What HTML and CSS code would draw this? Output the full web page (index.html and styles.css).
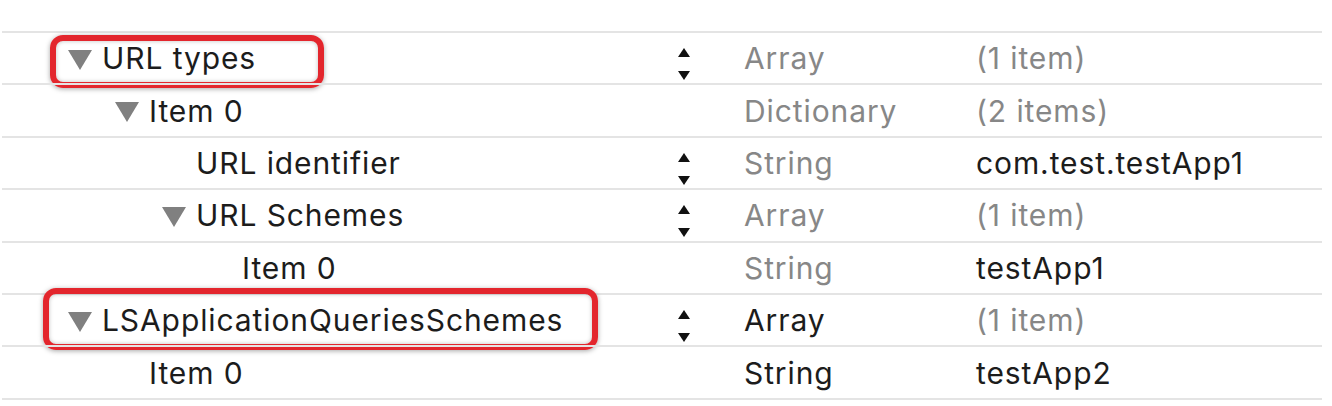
FILE: index.html
```html
<!DOCTYPE html>
<html>
<head>
<meta charset="utf-8">
<link rel="stylesheet" href="styles.css">
</head>
<body>
<div class="plist">
  <div class="row">
    <div class="key lvl0"><svg class="disc" viewBox="0 0 24 20"><polygon points="0,0 24,0 12,20"/></svg><span>URL types</span></div>
    <div class="step"><svg viewBox="0 0 12 32"><polygon points="6,0 12,9 0,9"/><polygon points="0,23 12,23 6,32"/></svg></div>
    <div class="type dim">Array</div>
    <div class="val dim">(1 item)</div>
    <div class="mark mark1"></div>
  </div>
  <div class="row">
    <div class="key lvl1"><svg class="disc" viewBox="0 0 24 20"><polygon points="0,0 24,0 12,20"/></svg><span>Item 0</span></div>
    <div class="step"></div>
    <div class="type dim">Dictionary</div>
    <div class="val dim">(2 items)</div>
  </div>
  <div class="row">
    <div class="key lvl2"><span class="nodisc"></span><span>URL identifier</span></div>
    <div class="step"><svg viewBox="0 0 12 32"><polygon points="6,0 12,9 0,9"/><polygon points="0,23 12,23 6,32"/></svg></div>
    <div class="type dim">String</div>
    <div class="val">com.test.testApp1</div>
  </div>
  <div class="row">
    <div class="key lvl2"><svg class="disc" viewBox="0 0 24 20"><polygon points="0,0 24,0 12,20"/></svg><span>URL Schemes</span></div>
    <div class="step"><svg viewBox="0 0 12 32"><polygon points="6,0 12,9 0,9"/><polygon points="0,23 12,23 6,32"/></svg></div>
    <div class="type dim">Array</div>
    <div class="val dim">(1 item)</div>
  </div>
  <div class="row">
    <div class="key lvl3"><span class="nodisc"></span><span>Item 0</span></div>
    <div class="step"></div>
    <div class="type dim">String</div>
    <div class="val">testApp1</div>
  </div>
  <div class="row">
    <div class="key lvl0"><svg class="disc" viewBox="0 0 24 20"><polygon points="0,0 24,0 12,20"/></svg><span>LSApplicationQueriesSchemes</span></div>
    <div class="step"><svg viewBox="0 0 12 32"><polygon points="6,0 12,9 0,9"/><polygon points="0,23 12,23 6,32"/></svg></div>
    <div class="type">Array</div>
    <div class="val dim">(1 item)</div>
    <div class="mark mark2"></div>
  </div>
  <div class="row last">
    <div class="key lvl1"><span class="nodisc"></span><span>Item 0</span></div>
    <div class="step"></div>
    <div class="type">String</div>
    <div class="val">testApp2</div>
  </div>
</div>
</body>
</html>
```
FILE: styles.css
```css
html, body {
  margin: 0;
  padding: 0;
  background: #ffffff;
}
body {
  padding-top: 31px;
  font-family: Inter, "Liberation Sans", sans-serif;
  font-size: 30px;
  letter-spacing: 0.9px;
  color: #1c1c1c;
}
.plist {
  margin-left: 2px;
  width: 1320px;
}
.row {
  position: relative;
  box-sizing: border-box;
  height: 52.4px;
  border-top: 2px solid #e4e4e4;
  display: grid;
  grid-template-columns: 662px 40px 273px 1fr;
  align-items: center;
}
.row.last {
  height: 54.4px;
  border-bottom: 2px solid #e4e4e4;
}
.key {
  display: flex;
  align-items: center;
  white-space: nowrap;
}
.lvl0 { padding-left: 66px; }
.lvl1 { padding-left: 113px; }
.lvl2 { padding-left: 160px; }
.lvl3 { padding-left: 206px; }
.disc {
  width: 24px;
  height: 20px;
  fill: #808080;
  margin-right: 10px;
  margin-top: 3px;
  flex: none;
}
.nodisc {
  display: inline-block;
  width: 34px;
  flex: none;
}
.step {
  display: flex;
  justify-content: center;
  align-items: center;
  height: 100%;
}
.step svg {
  width: 12px;
  height: 32px;
  fill: #111111;
  margin-top: 12px;
}
.type {
  padding-left: 40px;
  white-space: nowrap;
}
.val {
  margin-left: -1px;
  white-space: nowrap;
}
.dim {
  color: #878787;
}
.mark {
  position: absolute;
  box-sizing: border-box;
  border: 6px solid #e3262d;
  border-radius: 13px;
  box-shadow: 0 1px 5px rgba(0,0,0,0.35), inset 0 0 4px rgba(0,0,0,0.25);
  pointer-events: none;
}
.mark1 {
  left: 48px;
  top: 2px;
  width: 274px;
  height: 53px;
}
.mark2 {
  left: 41px;
  top: -7px;
  width: 555px;
  height: 62px;
}
```
